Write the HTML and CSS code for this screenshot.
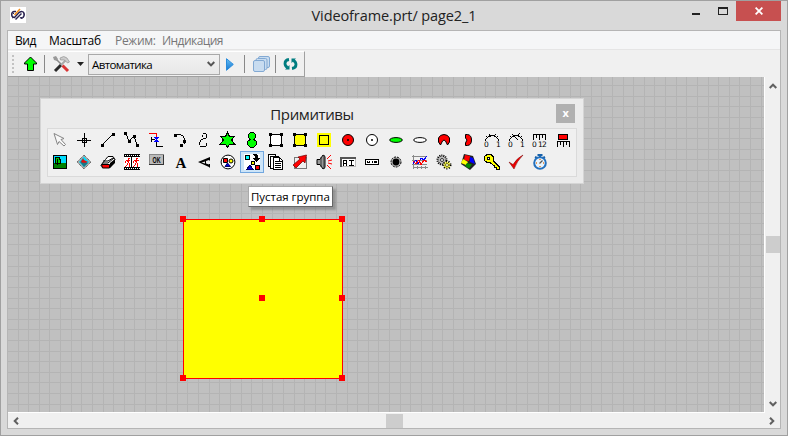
FILE: index.html
```html
<!DOCTYPE html>
<html lang="ru">
<head>
<meta charset="utf-8">
<title>Videoframe.prt/ page2_1</title>
<link rel="stylesheet" href="styles.css">
</head>
<body>
<div class="window">
  <header class="titlebar">
    <svg class="app-icon" viewBox="0 0 16 16"><path fill="#fff" d="M0 0h16v16H0z"/><g fill="none" stroke="#292250" stroke-width="1.5"><path d="M6 4.500H4Q1.500 5 1.700 8Q2 10.500 4.500 10.500L9 5.500Q13 3.500 13.800 6Q15 8 13 10.500Q11.500 11.500 10 10.500"/><path d="M5.500 12.500l6-6"/></g><path d="M4.500 8l5.500-6" stroke="#f28c19" stroke-width="1.500"/><path d="M2 5l2 2M2 11l2-1M12 12l-1-2" stroke="#292250"/></svg>
    <div class="title">Videoframe.prt/ page2_1</div>
    <div class="controls"><span class="min"></span><span class="max"></span><span class="close"><svg viewBox="0 0 8 8"><path d="M.6.6l6.8 6.8M7.4.6L.6 7.4" stroke="#fff" stroke-width="1.8"/></svg></span></div>
  </header>
  <main class="client">
    <nav class="menu"><span class="m-view">Вид</span><span class="m-scale">Масштаб</span><span class="m-mode">Режим:</span><span class="m-ind">Индикация</span></nav>
    <div class="toolbar-row">
      <div class="toolbar">
        <span class="grip"></span>
        <svg class="up" viewBox="0 0 14 16"><path d="M6.5 1l6 6v1h-3v6.500h-6V8h-3V7z" fill="#0f0" stroke="#000"/></svg>
        <span class="sep"></span>
        <svg class="tools" viewBox="0 0 17 17"><path d="M2 2l7 7" stroke="#888" stroke-width="1.500"/><path d="M0 1l3-1 2 3-1 2-3-1z" fill="#999"/><path d="M2 15l6-6" stroke="#292929" stroke-width="3"/><path d="M8 9l5-5" stroke="#aaa" stroke-width="2"/><path d="M7 2q4-3 7 0l2.500 4-2 1-3-3-4 0z" fill="#ccc" stroke="#888" stroke-width=".6"/><path d="M9.500 9.500l5.500 5.500" stroke="#d93535" stroke-width="3"/></svg>
        <svg class="caret" viewBox="0 0 7 4"><path d="M0 0h7L3.5 4z" fill="#222"/></svg>
        <div class="combo"><span>Автоматика</span><svg viewBox="0 0 8 6"><path d="M.7 1L4 4.4 7.3 1" fill="none" stroke="#555" stroke-width="2"/></svg></div>
        <svg class="play" viewBox="0 0 8 13"><defs><linearGradient id="pg" x2="0" y2="1"><stop stop-color="#67bff5"/><stop offset="1" stop-color="#1777cf"/></linearGradient></defs><path d="M.5.7L7.3 6.4.5 12.3z" fill="url(#pg)" stroke="#278bdc"/></svg>
        <span class="sep s2"></span>
        <svg class="stack" viewBox="0 0 17 16"><g fill="#c8dcf0" stroke="#82a9d3"><rect x="5.5" y=".5" width="11" height="11" rx="1.5"/><rect x="3" y="2.5" width="11" height="11" rx="1.5"/><rect x=".5" y="4.5" width="11" height="11" rx="1.5"/></g></svg>
        <span class="sep s3"></span>
        <svg class="sync" viewBox="0 0 15 12"><g fill="none" stroke="#007d80" stroke-width="2.800"><path d="M6 1.500Q2 2 2 5.500Q2 8 4.500 9.500"/><path d="M9 10.500Q13 10 13 6.500Q13 4 10.500 2.500"/></g><path d="M6.500 7v4.500H2zM8.500 5V.5H13z" fill="#007d80"/></svg>
      </div>
    </div>
    <section class="canvas">
      <div class="shape"><i class="h tl"></i><i class="h tc"></i><i class="h tr"></i><i class="h cc"></i><i class="h cr"></i><i class="h bl"></i><i class="h br"></i></div>
      <div class="palette">
        <div class="palette-head"><span>Примитивы</span><b>x</b></div>
        <div class="icons">
          <svg viewBox="0 0 16 16"><path d="M2 1.500l10 5-3 1 4.500 5-1.500 1.500-5-4.500-1.500 3z" fill="#f8f8f8" stroke="#858585"/></svg>
          <svg viewBox="0 0 16 16" class="px"><path d="M8.500 1v14M1 8.500h14M6.500 6.500h4v4h-4z"/></svg>
          <svg viewBox="0 0 16 16" class="px"><path d="M2 13L13 2"/><path class="k" d="M1 12h3v3H1zM12 1h3v3h-3z"/></svg>
          <svg viewBox="0 0 16 16" class="px"><path d="M2 2l3 7 5-5 3 9"/><path class="k" d="M0 0h3v3H0zM4 8h3v3H4zM9 3h3v3H9zM12 12h3v3h-3z"/></svg>
          <svg viewBox="0 0 16 16" class="px"><path d="M1 1.500h7.500v4" stroke="red"/><path d="M3.500 5v5M3 7.500h4M8.500 10v4.500h6"/><path d="M6 5.500h5M6 9.500h5M7 6.500h3M7 8.500h3M8 7.500h1" stroke="#00f"/></svg>
          <svg viewBox="0 0 16 16" class="px"><path d="M4 2.500h5M9 3.500h2M11.500 4v2M12.500 6v6M11 12.500H9"/><path class="k" d="M2 2h3v3H2zM11 8h3v3h-3zM8 12h3v3H8z"/></svg>
          <svg viewBox="0 0 16 16" class="px"><path d="M6 4.500h1M6.500 5V2.500M7 1.500h3M10.500 2v4M10 6.500H7M7 7.500H5M4.500 8v2M3.500 10v3M4 14.500h6M10.500 14v-3"/></svg>
          <svg viewBox="0 0 16 16" class="px"><path d="M7.500 .5l2 4h5l-3 3.500 3 4h-5l-2 3.500-2-3.500h-5l3-4-3-3.500h5z" fill="#0f0"/></svg>
          <svg viewBox="0 0 16 16" class="px"><path d="M6.500 .5h3l2 2v3l-1.500 2 2.500 2v3l-3 3h-3l-3-3v-3l2.500-2-1.500-2v-3z" fill="#0f0"/></svg>
          <svg viewBox="0 0 16 16" class="px"><path d="M2.500 2.500h11v11h-11z" fill="#fff"/><path class="k" d="M1 1h3v3H1zM12 1h3v3h-3zM1 12h3v3H1zM12 12h3v3h-3z"/></svg>
          <svg viewBox="0 0 16 16" class="px"><path d="M2.500 2.500h11v11h-11z" fill="#ff0"/><path class="k" d="M1 1h3v3H1zM12 1h3v3h-3zM1 12h3v3H1zM12 12h3v3h-3z"/></svg>
          <svg viewBox="0 0 16 16" class="px"><path d="M1 1h14v14H1z" fill="#ff0" stroke="none"/><path d="M3.500 3.500h9v9h-9z"/></svg>
          <svg viewBox="0 0 16 16"><circle cx="8" cy="8" r="5.500" fill="red" stroke="#000"/><circle cx="8" cy="8" r="1"/></svg>
          <svg viewBox="0 0 16 16"><circle cx="8" cy="8" r="5.500" fill="#fff" stroke="#000"/><circle cx="8" cy="8" r="1"/></svg>
          <svg viewBox="0 0 16 16"><ellipse cx="8" cy="8" rx="6.300" ry="2.400" fill="#0f0" stroke="#000"/></svg>
          <svg viewBox="0 0 16 16"><ellipse cx="8" cy="8" rx="6.300" ry="2.400" fill="#fff" stroke="#000"/></svg>
          <svg viewBox="0 0 16 16"><path d="M4.500 13L2.500 10V6Q4 2.500 8 2.500T13.500 6v4L11.500 13 9.500 9 8 8 6.500 9z" fill="red" stroke="#000"/></svg>
          <svg viewBox="0 0 16 16"><path d="M5.500 2.500h2Q11.500 3 11.500 8T7.500 13.500h-2V11L7 8 5.500 6z" fill="red" stroke="#000"/></svg>
          <svg viewBox="0 0 16 16" class="px"><path d="M1.500 9V7.500L3.500 5.500 6 3.500h4l2.500 2 2 2V9M5 2l2 3M10 4l2-2M2 4l2 2M12 6l2-2"/><text x="0" y="15">0</text><text x="12" y="15">1</text></svg>
          <svg viewBox="0 0 16 16" class="px"><path d="M1.500 9V7.500L3.500 5.500 6 3.500h4l2.500 2 2 2V9M4 2l6 6M9 4l3-3M2 4l2 2M12 6l2-2"/><text x="0" y="15">0</text><text x="12" y="15">1</text></svg>
          <svg viewBox="0 0 16 16" class="px"><path d="M1.500 8V2.500h12V8M4.500 3v3M7.500 3v5M10.500 3v3"/><text x="0" y="15">0</text><text x="6" y="15">1</text><text x="10" y="15">2</text></svg>
          <svg viewBox="0 0 16 16" class="px"><path d="M2.500 2.500h9v5h-9z" fill="red"/><path d="M1.500 15V9.500h12V15M4.500 10v3M7.500 10v5M10.500 10v3"/></svg>

          <svg viewBox="0 0 16 16" class="px"><path d="M1.500 1.500h13v13h-13z" fill="#0df"/><path d="M2 9h12v5H2z" fill="#008000" stroke="none"/><path d="M4 3.500h3l1 2v4H3v-4z" fill="#0c0"/><path d="M5.500 5v6"/></svg>
          <svg viewBox="0 0 16 16"><path d="M8 1l7 7-7 7-7-7z" fill="#aaa" stroke="#444" stroke-dasharray="1 1"/><path d="M8 2.500L13 8l-5 5-5-5z" fill="#0df"/><path d="M4 8l2-2 6 3-4 4z" fill="#187887"/><path d="M7 4l1 2 4 2-4 1-3-1z" fill="#d11"/></svg>
          <svg viewBox="0 0 16 16"><path d="M1.500 10.500l4-5L8 2.500h5l2 3-5 8H3l-2-2z" fill="#fff" stroke="#000"/><path d="M3 7h5l5-3M2.500 9H8l6-5" stroke="#000" fill="none"/><path d="M10 9l5-4v4l-5 5z"/><path d="M1.500 10.500h8v3.500h-7z" fill="red" stroke="#000"/></svg>
          <svg viewBox="0 0 16 16" class="px"><path class="k" d="M0 0h16v16H0z"/><path d="M0 3h7v10H0zM8 3h8v10H8z" fill="#fff" stroke="none"/><path d="M1 1.500h15M1 14.500h15" stroke="#fff" stroke-dasharray="1 1"/><g stroke="red"><path d="M4 4.500h2M4.500 5v4M2 6.500h4M1.500 7v2M3.500 9v2M5.500 9v4M2.500 11v1M1 12.500h1M12 4.500h2M12.500 5v4M10 6.500h5M9.500 7v2M11.500 9v2M13.500 9v4M10.500 11v1M9 12.500h1"/><path d="M3 7.500h2M11 7.500h2"/></g></svg>
          <svg viewBox="0 0 16 16" class="px"><path d="M1.500 .5h14v10h-14z" fill="#bbb" stroke="#888"/><path d="M1 10.500h14.500V1" stroke="#333"/><text class="ok" x="4.500" y="8.500" textLength="8" lengthAdjust="spacingAndGlyphs">OK</text></svg>
          <svg viewBox="0 0 16 16"><text class="a" x="3.500" y="14">A</text></svg>
          <svg viewBox="0 0 16 16"><path d="M2 8L14 3v3.500h-1V6l-3 1v2.500l3 1V10h1v3.500h-1V13zM9 7.500L5.500 8.600 9 9.500z" fill-rule="evenodd"/></svg>
          <svg viewBox="0 0 16 16"><circle cx="8" cy="8" r="6.900" fill="#fff" stroke="#000"/><path d="M3.500 4.500h4v4h-4z" fill="red" stroke="#000"/><circle cx="11" cy="7" r="2" fill="#ff0" stroke="#000"/><path d="M5 12.500L7.500 9l3 3.500z" fill="#00d" stroke="#006"/></svg>
          <svg viewBox="0 0 16 16" class="px selected"><path d="M0 0h16v16H0z" fill="#fff" stroke="none"/><path d="M1.500 1.500h4v4h-4z" fill="#0ff"/><path class="k" d="M9 0h3l2 2v2h2l-4 4-4-4h3V2L9 1z"/><path d="M7.500 7.500h3v3h-3z" fill="#ff0"/><path d="M11.500 11.500h4v4h-4z" fill="red"/><path d="M3 15l3-4 3 4z" fill="#00d" stroke="#006"/></svg>
          <svg viewBox="0 0 16 16" class="px"><path d="M.5.500h7v12h-7z" fill="#fff"/><path d="M2.500 2.500h8v12h-8z" fill="#fff"/><path d="M5.500 3.500h6l3 3v9h-9z" fill="#fff"/><path d="M7 7.500h5M7 9.500h6M7 11.500h6M7 13.500h6M11.500 4v3h3"/></svg>
          <svg viewBox="0 0 16 16"><path d="M2.500 3.500h12v11h-12z" stroke="#000" fill="none" stroke-dasharray="1 1"/><path d="M14.500 1L6 3l2 2-7 6 3 3 7-7 2 2z" fill="red" stroke="#600" stroke-width=".7"/></svg>
          <svg viewBox="0 0 16 16"><path d="M1 5.500h3L7 1l2 1.500v11L7 15l-3-4.500H1z" fill="#999" stroke="#000"/><path d="M5 3v10M8 1v14" stroke="#333"/><path d="M11 5l4-4M12 7l4-1M12 9l4 1M11 11l4 4" stroke="red"/></svg>
          <svg viewBox="0 0 16 16" class="px"><path d="M.5 3.500h15v9H.5z" fill="#fff" stroke="#bbb"/><path d="M0 3.500h16M.5 3v10" stroke="#555" stroke-width="2"/><path d="M3.500 12V7l1-1h1l1 1v5M4 9.500h2M9 6.500h5M9 11.500h5M11.500 7v5"/></svg>
          <svg viewBox="0 0 16 16" class="px"><path d="M1.500 5.500h13v5h-13z" fill="#fff"/><path d="M3.500 7v2M5.500 7v2M3 8.500h3M8.500 7v2M10.500 7.500h2v1h-2z"/></svg>
          <svg viewBox="0 0 16 16"><circle cx="8" cy="8" r="5" fill="#bbb" stroke="#000" stroke-dasharray="2 1"/><circle cx="8" cy="8" r="3.400"/></svg>
          <svg viewBox="0 0 16 16" class="px"><path d="M1.500 1v14M1 13.500h15M0 2.500h15M0 6.500h15M0 10.500h15M5.500 12v3M9.500 12v3M13.500 12v3" stroke="#888"/><path d="M1 10l3-4 2 4 3-6 3 2 3-4" stroke="#00f"/><path d="M1 7l3 3 3-4 2 5 3-5 3 2" stroke="red"/></svg>
          <svg viewBox="0 0 16 16"><circle cx="6" cy="6" r="4.500" fill="#bbb" stroke="#000" stroke-width="2" stroke-dasharray="1 1"/><circle cx="6" cy="6" r="1.500" fill="#fff" stroke="#333"/><circle cx="11" cy="11" r="3.500" fill="#ff5" stroke="#000" stroke-width="2" stroke-dasharray="1 1.500"/><circle cx="11" cy="11" r="1.500" fill="#fff" stroke="#770"/></svg>
          <svg viewBox="0 0 16 16"><path d="M4 0l9 2 3 8-6 6-9-6z" fill="#222"/><path d="M5 1l5 1-1 5-5-1z" fill="red"/><path d="M10 3l3 1 2 6-5-2z" fill="#00f"/><path d="M3 5l5 3-2 3-5-2z" fill="#ff0"/><path d="M7 9l5 1.500-3 4-4-2.500z" fill="#080"/></svg>
          <svg viewBox="0 0 16 16" class="px"><path d="M3 .5h4l2 2v4l6 6v3h-3v-2h-2v-2L6 8.500H3l-2.500-2v-4z" fill="#ff0"/><path d="M3.500 3.500h2v2h-2z" fill="#fff"/></svg>
          <svg viewBox="0 0 16 16"><path d="M1 8l4 2.500Q9 4 15 1Q9 7 6 15z" fill="#e00" stroke="#700" stroke-width=".5"/></svg>
          <svg viewBox="0 0 16 16"><path d="M5.500 1h5M8 0v3M3 3l2 1M13 3l-2 1" stroke="#1761aa" stroke-width="2"/><circle cx="8" cy="9" r="5.800" fill="#e7f4ff" stroke="#2470bd" stroke-width="2"/><path d="M8 5v1M8 12v1M4 9h1M11 9h1" stroke="#f17b18" stroke-width="1.500"/><path d="M7.500 9.500l3-3" stroke="#555" stroke-width="1.300"/></svg>
        </div>
      </div>
      <div class="tooltip">Пустая группа</div>
    </section>
    <div class="vscroll"><svg viewBox="0 0 8 6"><path d="M.7 5L4 1.700 7.300 5"/></svg><span></span><svg viewBox="0 0 8 6"><path d="M.7 1L4 4.300 7.300 1"/></svg></div>
    <div class="hscroll"><svg viewBox="0 0 6 8"><path d="M5 .7L1.700 4 5 7.300"/></svg><span></span><svg viewBox="0 0 6 8"><path d="M1 .7L4.300 4 1 7.300"/></svg></div>
  </main>
</div>
</body>
</html>
```
FILE: styles.css
```css
* { box-sizing: border-box; }
body { margin: 0; overflow: hidden; font: 12px "Open Sans", "Noto Sans", sans-serif; color: #000; }
svg { display: block; flex: none; }
.window { width: 788px; height: 436px; background: #d9d9d9; border: 1px solid #a0a0a0; padding: 0 6px 7px; }
.titlebar { display: grid; grid-template-columns: 125px 1fr 125px; height: 29px; }
.app-icon { width: 16px; height: 16px; margin: 6px 0 0 3px; }
.title { text-align: center; font-size: 14.5px; line-height: 29px; letter-spacing: -.1px; color: #222; white-space: nowrap; }
.controls { display: flex; justify-content: flex-end; align-items: flex-start; }
.min { width: 8px; height: 2px; background: #222; margin: 12px 18px 0 0; }
.max { width: 10px; height: 8px; border: 1px solid #222; border-top-width: 2px; margin: 6px 8px 0 0; }
.close { width: 45px; height: 20px; background: #c75050; display: grid; place-items: center; }
.close svg { width: 8px; height: 8px; }
.client { width: 774px; height: 399px; border: 1px solid #b5b5b5; display: grid; grid-template-columns: 757px 15px; grid-template-rows: 19px 27px 336px 15px; background: #f0f0f0; }
.menu { grid-column: 1 / 3; background: #f5f6f7; border-bottom: 1px solid #e5e5e5; display: flex; line-height: 20px; white-space: nowrap; padding-left: 7px; }
.m-view { width: 34px; letter-spacing: -.4px; }
.m-scale { width: 66px; letter-spacing: -.2px; }
.m-mode { width: 47px; letter-spacing: -.3px; }
.m-ind { letter-spacing: -.55px; }
.m-mode, .m-ind { color: #777; }
.toolbar-row { grid-column: 1 / 3; padding-top: 1px; }
.toolbar { width: 297px; height: 26px; border: solid #a0a0a0; border-width: 0 1px 1px 0; border-top: 1px solid #fff; display: flex; align-items: center; }
.grip { width: 2px; height: 18px; margin: 0 10px 0 4px; background: repeating-linear-gradient(#c2c2c2 0 2px, transparent 2px 4px); }
.up { width: 14px; height: 16px; }
.sep { width: 1px; height: 18px; background: #888; margin-left: 6px; }
.tools { width: 17px; height: 17px; margin-left: 8px; }
.caret { width: 7px; height: 4px; margin-left: 7px; }
.combo { width: 132px; height: 21px; margin-left: 4px; border: 1px solid #a9a9a9; background: linear-gradient(#f1f1f1, #e8e8e8); display: flex; align-items: center; justify-content: space-between; padding: 0 4px 0 3px; font-size: 11.5px; letter-spacing: -.6px; }
.combo svg { width: 8px; height: 6px; }
.play { width: 8px; height: 13px; margin-left: 6px; }
.s2 { margin-left: 10px; }
.stack { width: 17px; height: 16px; margin-left: 8px; }
.s3 { margin-left: 5px; }
.sync { width: 15px; height: 12px; margin-left: 7px; }
.canvas { position: relative; width: 757px; height: 336px; border: solid #fff; border-width: 0 1px 1px 0; background: repeating-linear-gradient(90deg, transparent 0 9.61px, #b4b4b4 9.61px 10.614px), repeating-linear-gradient(transparent 0 8.100px, #b4b4b4 8.100px 9.100px, transparent 9.100px 10.620px), #c0c0c0; }
.shape { position: absolute; left: 175px; top: 142px; width: 160px; height: 160px; background: #ff0; border: 1px solid red; }
.h { position: absolute; width: 6px; height: 6px; background: red; }
.tl, .tc, .tr { top: -4px; }
.bl, .br { bottom: -3px; }
.tl, .bl { left: -4px; }
.tr, .cr, .br { right: -3px; }
.tc, .cc { left: 75px; }
.cc, .cr { top: 75px; }
.palette { position: absolute; left: 32px; top: 21px; width: 544px; height: 86px; background: #ebebeb; border: 1px solid #d5d5d5; padding: 0 6px; }
.palette-head { height: 29px; display: grid; place-items: center; font-size: 15px; letter-spacing: -.4px; color: #222; }
.palette-head > * { grid-area: 1 / 1; }
.palette-head b { justify-self: end; align-self: start; margin: 5px 2px 0 0; width: 19px; height: 19px; background: #b0b0b0; color: #fff; font-size: 11px; line-height: 17px; text-align: center; }
.icons { width: 530px; height: 49px; border: 1px solid #dadada; background: #f0f0f0; display: grid; grid-template-columns: repeat(22, 24px); grid-template-rows: 22px 22px; }
.icons svg { width: 24px; height: 22px; padding: 3px 4px; overflow: visible; }
.icons svg.selected { background: #cce4f8; border: 1px solid #72a7df; padding: 2px 3px; }
.px { shape-rendering: crispEdges; fill: none; stroke: #000; stroke-width: 1; }
.k { fill: #000; stroke: none; }
.icons text { font: 7.5px "DejaVu Sans", sans-serif; fill: #000; stroke: none; }
.icons .a { font: bold 15px "Liberation Serif", serif; }
.icons .ok { font: bold 9px "Liberation Sans", sans-serif; }
.tooltip { position: absolute; left: 240px; top: 109px; width: 85px; height: 21px; background: #fff; border: 1px solid #666; border-top-color: #aaa; border-left-color: #aaa; padding-left: 2px; font-size: 11.500px; line-height: 20px; letter-spacing: -.03px; white-space: nowrap; box-shadow: 3px 3px 2px #7779; }
.vscroll, .hscroll { display: grid; background: #f0f0f0; }
.vscroll { grid-template-rows: 159px 17px 1fr; justify-items: center; }
.vscroll svg { width: 8px; height: 6px; margin-top: 6px; }
.vscroll svg:last-child { align-self: end; margin-bottom: 6px; }
.vscroll span { width: 14px; background: #cdcdcd; }
.hscroll { grid-column: 1 / 3; grid-template-columns: 378px 17px 1fr; align-items: center; }
.hscroll svg { width: 6px; height: 8px; margin-left: 5px; }
.hscroll svg:last-child { justify-self: end; margin-right: 5px; }
.hscroll span { height: 14px; background: #cdcdcd; }
.vscroll path, .hscroll path { fill: none; stroke: #606060; stroke-width: 2; }
```
